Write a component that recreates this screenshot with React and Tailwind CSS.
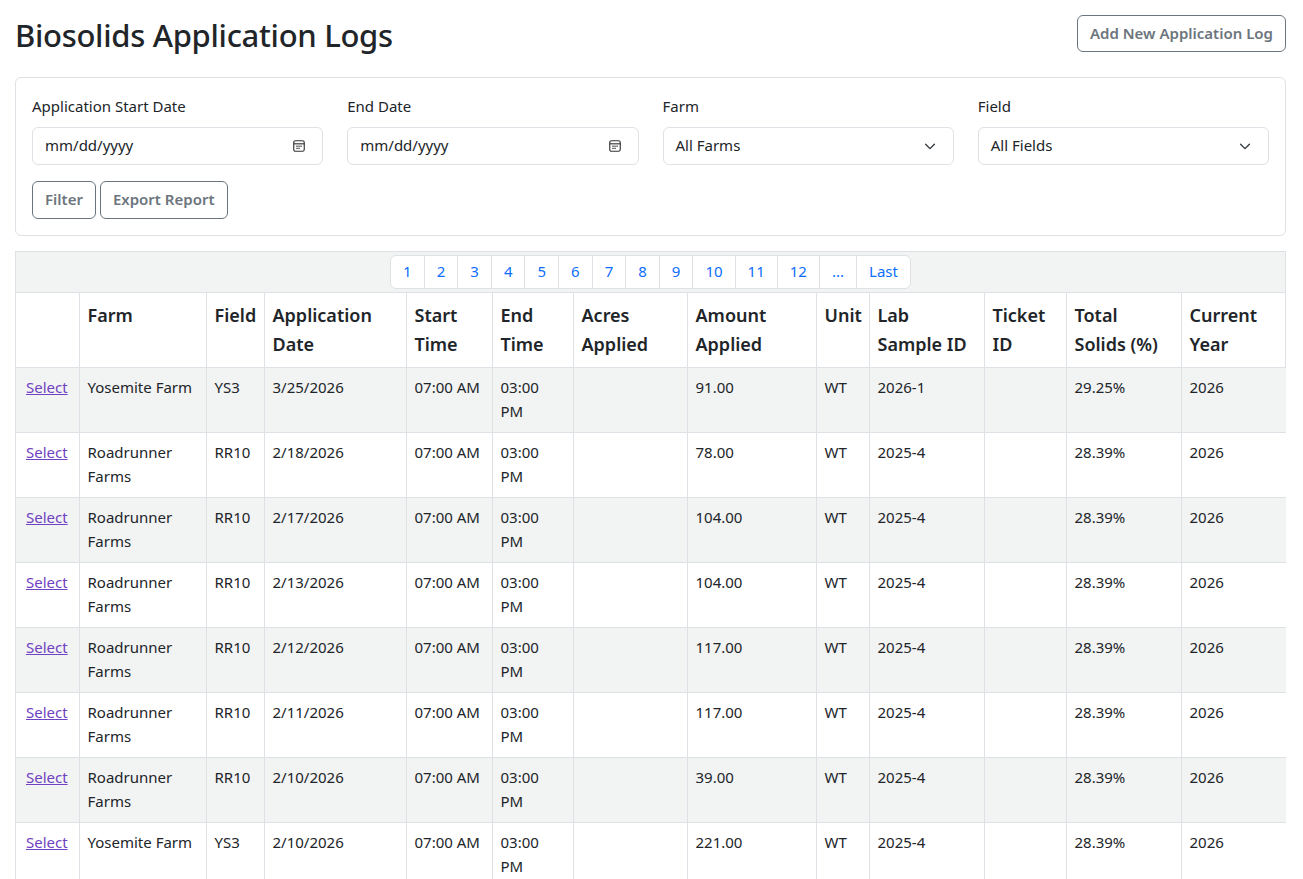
import React from 'react';

const cols = [63, 127, 58, 142, 86, 81, 114, 129, 53, 115, 82, 115, 105];
const heads = ['', 'Farm', 'Field', 'Application Date', 'Start Time', 'End Time', 'Acres Applied', 'Amount Applied', 'Unit', 'Lab Sample ID', 'Ticket ID', 'Total Solids (%)', 'Current Year'];

const rows = [
  ['Yosemite Farm', 'YS3', '3/25/2026', '91.00', '2026-1', '29.25%'],
  ['Roadrunner Farms', 'RR10', '2/18/2026', '78.00', '2025-4', '28.39%'],
  ['Roadrunner Farms', 'RR10', '2/17/2026', '104.00', '2025-4', '28.39%'],
  ['Roadrunner Farms', 'RR10', '2/13/2026', '104.00', '2025-4', '28.39%'],
  ['Roadrunner Farms', 'RR10', '2/12/2026', '117.00', '2025-4', '28.39%'],
  ['Roadrunner Farms', 'RR10', '2/11/2026', '117.00', '2025-4', '28.39%'],
  ['Roadrunner Farms', 'RR10', '2/10/2026', '39.00', '2025-4', '28.39%'],
  ['Yosemite Farm', 'YS3', '2/10/2026', '221.00', '2025-4', '28.39%'],
];

const Cal = () => (
  <svg width="14" height="14" viewBox="0 0 16 16" fill="none" stroke="#333" strokeWidth="1.3">
    <rect x="2" y="2" width="12" height="12" rx="2" />
    <path d="M2 5.5h12" />
    <g fill="#333" stroke="none">
      <rect x="5" y="7.5" width="1.5" height="1.5" /><rect x="7.3" y="7.5" width="1.5" height="1.5" /><rect x="9.6" y="7.5" width="1.5" height="1.5" />
      <rect x="5" y="10" width="1.5" height="1.5" /><rect x="7.3" y="10" width="1.5" height="1.5" />
    </g>
  </svg>
);

const Chev = () => (
  <svg width="14" height="14" viewBox="0 0 16 16" fill="none" stroke="#343a40" strokeWidth="1.6" strokeLinecap="round" strokeLinejoin="round">
    <path d="M3 6l5 5 5-5" />
  </svg>
);

const Field = ({ label, children }) => (
  <div className="flex flex-col">
    <label className="mb-[9px] text-[15px] text-[#212529]">{label}</label>
    <div className="flex h-[38px] items-center justify-between rounded-md border border-[#dee2e6] bg-white pl-3 pr-4 text-[15px] text-[#212529]">
      {children}
    </div>
  </div>
);

export default function App() {
  const pages = ['1', '2', '3', '4', '5', '6', '7', '8', '9', '10', '11', '12', '...', 'Last'];
  return (
    <div className="min-h-screen bg-white pl-[15px] pr-[17px] pt-[12px] text-[#212529]" style={{ fontFamily: '"Noto Sans", "Open Sans", sans-serif' }}>
      <div className="flex items-start justify-between">
        <h1 className="mt-[1px] text-[31px] font-medium leading-[44px] tracking-[-0.3px]">Biosolids Application Logs</h1>
        <button className="mt-[3px] rounded-md border border-[#6c757d] px-3 py-[6px] text-[15px] font-semibold text-[#6c757d]">Add New Application Log</button>
      </div>

      <div className="mt-[20px] rounded-md border border-[#dee2e6] px-4 pb-4 pt-[17px]">
        <div className="grid grid-cols-4 gap-x-6">
          <Field label="Application Start Date"><span>mm/dd/yyyy</span><Cal /></Field>
          <Field label="End Date"><span>mm/dd/yyyy</span><Cal /></Field>
          <Field label="Farm"><span>All Farms</span><Chev /></Field>
          <Field label="Field"><span>All Fields</span><Chev /></Field>
        </div>
        <div className="mt-4 flex gap-1">
          <button className="h-[38px] rounded-md border border-[#6c757d] px-3 text-[15px] font-semibold text-[#6c757d]">Filter</button>
          <button className="h-[38px] rounded-md border border-[#6c757d] px-3 text-[15px] font-semibold text-[#6c757d]">Export Report</button>
        </div>
      </div>

      <div className="mt-[15px] border border-[#dee2e6]">
        <div className="flex justify-center border-b border-[#dee2e6] bg-[#f2f3f3] py-[3px]">
          <div className="flex rounded-md border border-[#dee2e6] bg-white">
            {pages.map((p, i) => (
              <span key={p} className={`flex h-[32px] items-center px-[12px] text-[15px] text-[#0d6efd] ${i > 0 ? 'border-l border-[#dee2e6]' : ''}`}>{p}</span>
            ))}
          </div>
        </div>
        <table className="w-full table-fixed border-collapse text-[15px]">
          <colgroup>
            {cols.map((w, i) => <col key={i} style={{ width: w }} />)}
          </colgroup>
          <thead>
            <tr>
              {heads.map((h, i) => (
                <th key={i} className={`h-[74px] px-2 py-[8px] text-left align-top text-[18px] font-semibold leading-[29px] ${i > 0 ? 'border-l border-[#dee2e6]' : ''}`}>{h}</th>
              ))}
            </tr>
          </thead>
          <tbody>
            {rows.map((r, idx) => {
              const cells = [null, r[0], r[1], r[2], '07:00 AM', '03:00 PM', '', r[3], 'WT', r[4], '', r[5], '2026'];
              return (
                <tr key={idx} className={idx % 2 === 0 ? 'bg-[#f2f3f3]' : 'bg-white'}>
                  {cells.map((c, i) => (
                    <td key={i} className={`h-[65px] border-t border-[#dee2e6] px-2 pb-[8px] pt-[7px] align-top leading-[24px] ${i > 0 ? 'border-l' : 'pl-[10px]'}`}>
                      {i === 0 ? <a className="text-[#6f42c1] underline" href="#">Select</a> : c}
                    </td>
                  ))}
                </tr>
              );
            })}
          </tbody>
        </table>
      </div>
    </div>
  );
}
